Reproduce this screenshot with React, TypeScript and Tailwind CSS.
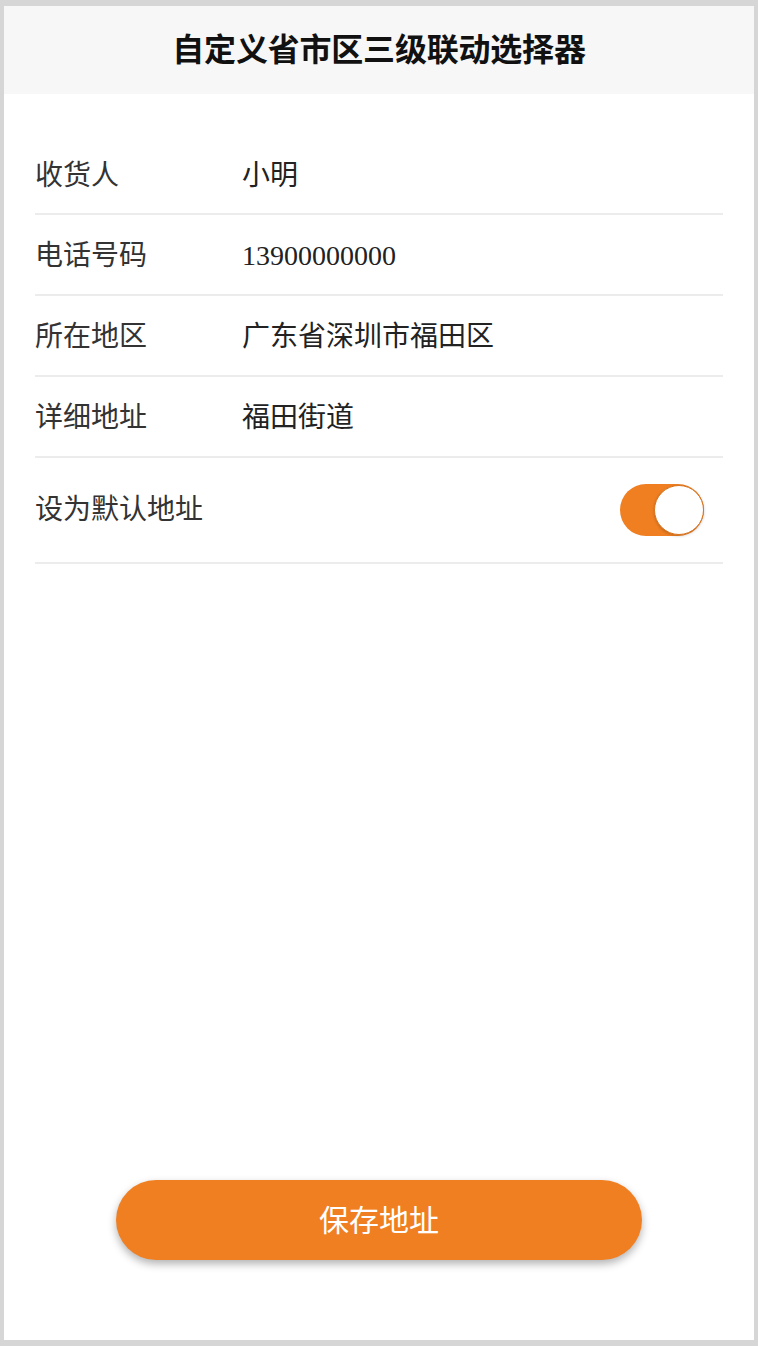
import React from "react";

const rows = [
  { label: "收货人", value: "小明" },
  { label: "电话号码", value: "13900000000" },
  { label: "所在地区", value: "广东省深圳市福田区" },
  { label: "详细地址", value: "福田街道" },
];

const font = "font-['Liberation_Serif','Noto_Sans_CJK_SC',serif]";

export default function App() {
  return (
    <div className={`w-[758px] h-[1346px] bg-[#d6d6d6] pt-[6px] pb-[6px] px-[4px] ${font}`}>
      <div className="w-full h-full bg-white flex flex-col">
        <div className="h-[88px] bg-[#f7f7f7] flex items-center justify-center">
          <h1 className="text-[32px] font-semibold text-[#111] tracking-[-0.2px]">自定义省市区三级联动选择器</h1>
        </div>
        <div className="px-[31px] pt-[53px]">
          {rows.map((row, i) => (
            <div
              key={row.label}
              className={`flex items-center border-b-2 border-[#ececec] ${i === 0 ? "h-[68px] pb-[8px]" : "h-[81px] pt-[2px]"}`}
            >
              <span className="w-[207px] text-[28px] text-[#333]">{row.label}</span>
              <span className="text-[28px] text-[#222]">{row.value}</span>
            </div>
          ))}
          <div className="flex items-center justify-between h-[106px] border-b-2 border-[#ececec]">
            <span className="text-[28px] text-[#333]">设为默认地址</span>
            <div className="w-[84px] h-[52px] rounded-full bg-[#f07f22] flex items-center justify-end mr-[19px]">
              <div className="w-[50px] h-[50px] rounded-full bg-white border border-[#d9731c] shadow-[0_1px_3px_rgba(0,0,0,0.2)]" />
            </div>
          </div>
        </div>
        <div className="flex-1" />
        <div className="flex justify-center pb-[80px]">
          <button className="w-[526px] h-[80px] rounded-full bg-[#f07f22] text-white text-[30px] shadow-[0_4px_8px_rgba(0,0,0,0.3)]">
            保存地址
          </button>
        </div>
      </div>
    </div>
  );
}
